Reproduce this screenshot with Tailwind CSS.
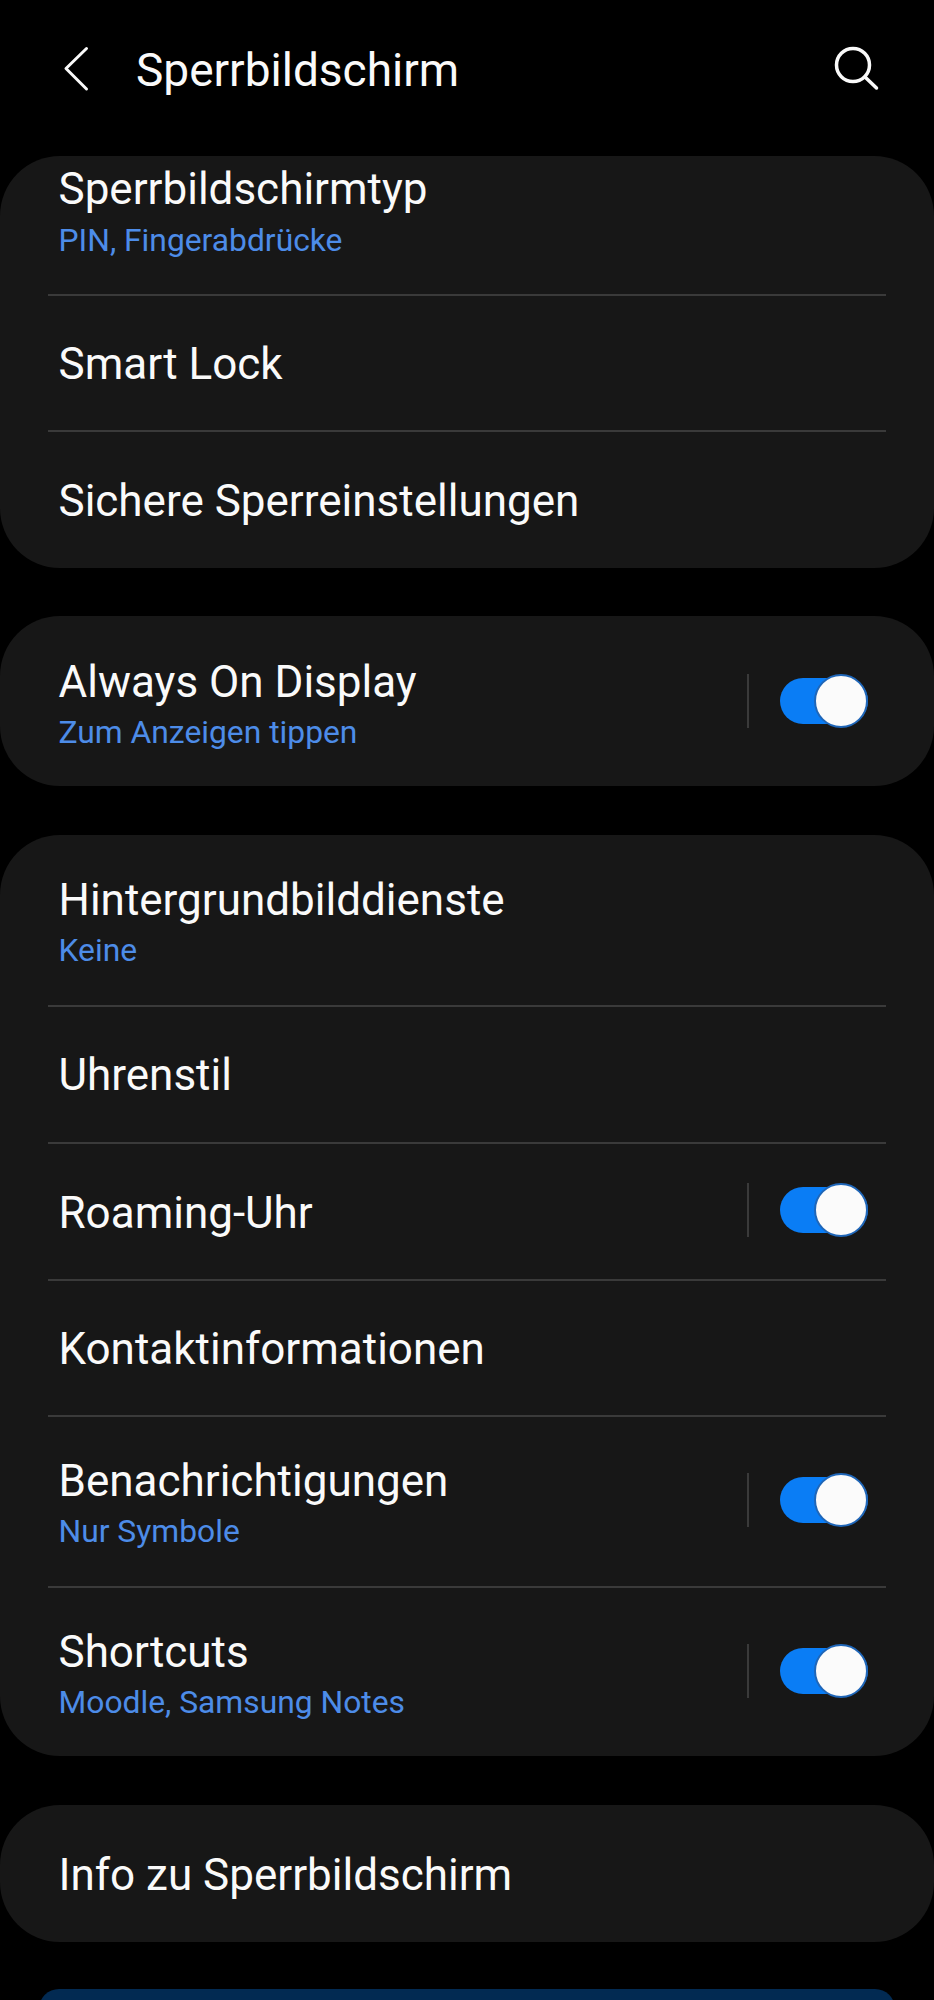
<!DOCTYPE html>
<html lang="de">
<head>
    <meta charset="UTF-8">
    <meta name="viewport" content="width=device-width, initial-scale=1.0">
    <title>Sperrbildschirm</title>
    <script src="https://cdn.jsdelivr.net/npm/@tailwindcss/browser@4"></script>
</head>
<body class="bg-black text-[#fafafa] font-['Roboto',sans-serif]">
<div class="h-[2000px] overflow-hidden">
    <header class="h-[156px] flex items-center pl-[62px] pr-[54px] pb-[16px]">
        <svg class="w-[30px] h-[48px]" viewBox="0 0 30 48" fill="none" stroke="#fafafa" stroke-width="3" stroke-linecap="round" stroke-linejoin="round"><path d="M24.5 2.5 L4 22.5 L24.5 43"/></svg>
        <h1 class="ml-[44px] text-[46px] leading-[56px] flex-1">Sperrbildschirm</h1>
        <svg class="w-[48px] h-[48px]" viewBox="0 0 48 48" fill="none" stroke="#fafafa" stroke-width="3.5" stroke-linecap="round"><circle cx="21" cy="19" r="16.5"/><path d="M33 31 L44.5 42"/></svg>
    </header>

    <section class="h-[412px] bg-[#171717] rounded-[60px] overflow-hidden px-[48px]">
        <div class="h-[140px] border-b-2 border-[#3a3a3a] pt-[8px] pl-[10.5px]">
            <div class="text-[44px] leading-[50px]">Sperrbildschirmtyp</div>
            <div class="text-[31.8px] leading-[44px] mt-[4px] text-[#4d8ce8]">PIN, Fingerabdrücke</div>
        </div>
        <div class="h-[136px] border-b-2 border-[#3a3a3a] flex items-center pl-[10.5px] pt-[2px] text-[44px]">Smart Lock</div>
        <div class="h-[136px] flex items-center pl-[10.5px] pt-[2px] text-[44px]">Sichere Sperreinstellungen</div>
    </section>

    <section class="mt-[48px] h-[170px] bg-[#171717] rounded-[60px] px-[48px] flex items-center justify-between">
        <div class="pl-[10.5px] pt-[8px]">
            <div class="text-[44px] leading-[50px]">Always On Display</div>
            <div class="text-[31.8px] leading-[44px] mt-[3px] text-[#4d8ce8]">Zum Anzeigen tippen</div>
        </div>
        <div class="flex items-center pr-[18px]">
            <div class="w-[2px] h-[54px] bg-[#3a3a3a] mr-[31px]"></div>
            <div class="relative w-[88px] h-[46px] rounded-full bg-[#0a7df5]">
                <div class="absolute right-0 top-[-4px] w-[54px] h-[54px] rounded-full bg-[#fbfbfb] border-2 border-[#1f66b8]"></div>
            </div>
        </div>
    </section>

    <section class="mt-[49px] h-[921px] bg-[#171717] rounded-[60px] px-[48px]">
        <div class="h-[172px] border-b-2 border-[#3a3a3a] flex flex-col justify-center pl-[10.5px] pt-[6px]">
            <div class="text-[44px] leading-[50px]">Hintergrundbilddienste</div>
            <div class="text-[31.8px] leading-[44px] mt-[3px] text-[#4d8ce8]">Keine</div>
        </div>
        <div class="h-[137px] border-b-2 border-[#3a3a3a] flex items-center pl-[10.5px] text-[44px]">Uhrenstil</div>
        <div class="h-[137px] border-b-2 border-[#3a3a3a] flex items-center justify-between pl-[10.5px]">
            <div class="text-[44px] pt-[2px]">Roaming-Uhr</div>
            <div class="flex items-center pr-[18px] mb-[4px]">
                <div class="w-[2px] h-[54px] bg-[#3a3a3a] mr-[31px]"></div>
                <div class="relative w-[88px] h-[46px] rounded-full bg-[#0a7df5]">
                    <div class="absolute right-0 top-[-4px] w-[54px] h-[54px] rounded-full bg-[#fbfbfb] border-2 border-[#1f66b8]"></div>
                </div>
            </div>
        </div>
        <div class="h-[136px] border-b-2 border-[#3a3a3a] flex items-center pl-[10.5px] pt-[2px] text-[44px]">Kontaktinformationen</div>
        <div class="h-[171px] border-b-2 border-[#3a3a3a] flex items-center justify-between pl-[10.5px]">
            <div class="pt-[6px]">
                <div class="text-[44px] leading-[50px]">Benachrichtigungen</div>
                <div class="text-[31.8px] leading-[44px] mt-[3px] text-[#4d8ce8]">Nur Symbole</div>
            </div>
            <div class="flex items-center pr-[18px] mb-[3px]">
                <div class="w-[2px] h-[54px] bg-[#3a3a3a] mr-[31px]"></div>
                <div class="relative w-[88px] h-[46px] rounded-full bg-[#0a7df5]">
                    <div class="absolute right-0 top-[-4px] w-[54px] h-[54px] rounded-full bg-[#fbfbfb] border-2 border-[#1f66b8]"></div>
                </div>
            </div>
        </div>
        <div class="h-[168px] flex items-center justify-between pl-[10.5px]">
            <div class="pt-[6px]">
                <div class="text-[44px] leading-[50px]">Shortcuts</div>
                <div class="text-[31.8px] leading-[44px] mt-[3px] text-[#4d8ce8]">Moodle, Samsung Notes</div>
            </div>
            <div class="flex items-center pr-[18px] mb-[2px]">
                <div class="w-[2px] h-[54px] bg-[#3a3a3a] mr-[31px]"></div>
                <div class="relative w-[88px] h-[46px] rounded-full bg-[#0a7df5]">
                    <div class="absolute right-0 top-[-4px] w-[54px] h-[54px] rounded-full bg-[#fbfbfb] border-2 border-[#1f66b8]"></div>
                </div>
            </div>
        </div>
    </section>

    <section class="mt-[49px] h-[137px] bg-[#171717] rounded-[60px] pl-[58.5px] pr-[58px] pt-[2px] flex items-center text-[44px]">Info zu Sperrbildschirm</section>

    <div class="mt-[47px] mx-[39px] h-[20px] bg-[#022a52] rounded-t-[40px]"></div>
</div>
</body>
</html>
